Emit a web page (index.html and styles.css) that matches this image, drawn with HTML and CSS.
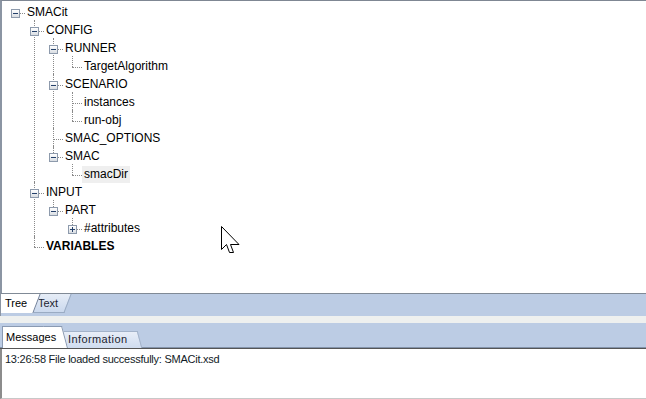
FILE: index.html
```html
<!DOCTYPE html>
<html lang="en">
<head>
  <meta charset="UTF-8" />
  <title>SMACit.xsd</title>
  <link rel="stylesheet" href="styles.css">
</head>
<body>
  <div class="tree-panel">
    <ul class="tree">
      <li><div class="row"><span class="box"></span><span class="label">SMACit</span></div>
        <ul>
          <li><div class="row"><span class="box"></span><span class="label">CONFIG</span></div>
            <ul>
              <li><div class="row"><span class="box"></span><span class="label">RUNNER</span></div>
                <ul>
                  <li><div class="row"><span class="label">TargetAlgorithm</span></div></li>
                </ul>
              </li>
              <li><div class="row"><span class="box"></span><span class="label">SCENARIO</span></div>
                <ul>
                  <li><div class="row"><span class="label">instances</span></div></li>
                  <li><div class="row"><span class="label">run-obj</span></div></li>
                </ul>
              </li>
              <li><div class="row"><span class="label">SMAC_OPTIONS</span></div></li>
              <li><div class="row"><span class="box"></span><span class="label">SMAC</span></div>
                <ul>
                  <li><div class="row"><span class="label selected">smacDir</span></div></li>
                </ul>
              </li>
            </ul>
          </li>
          <li><div class="row"><span class="box"></span><span class="label">INPUT</span></div>
            <ul>
              <li><div class="row"><span class="box"></span><span class="label">PART</span></div>
                <ul>
                  <li><div class="row"><span class="box plus"></span><span class="label">#attributes</span></div></li>
                </ul>
              </li>
            </ul>
          </li>
          <li><div class="row"><span class="label bold">VARIABLES</span></div></li>
        </ul>
      </li>
    </ul>

    <svg class="cursor" width="20" height="28" viewBox="0 0 20 28">
      <path d="M0.5 0.5 V23.5 L5.5 18.5 L8.5 26.5 L12.5 26.5 L9.5 18.5 H18 Z" fill="#fff" stroke="#000" stroke-width="1" stroke-linejoin="miter"/>
    </svg>
  </div>

  <div class="view-tabs">
    <div class="tab active">Tree</div>
    <div class="tab">Text</div>
  </div>

  <div class="splitter"></div>

  <div class="msg-tabs">
    <div class="tab active">Messages</div>
    <div class="tab">Information</div>
  </div>

  <div class="msg-body">
    13:26:58 File loaded successfully: SMACit.xsd
  </div>
</body>
</html>
```

FILE: styles.css
```css
* { box-sizing: border-box; }
html, body {
  margin: 0;
  padding: 0;
}
body {
  width: 646px;
  height: 399px;
  overflow: hidden;
  display: flex;
  flex-direction: column;
  font-family: "Liberation Sans", Arial, sans-serif;
  background: #fff;
  color: #000;
}

/* tree view */
.tree-panel {
  position: relative;
  height: 293px;
  border-top: 1px solid #7f8793;
  border-left: 2px solid #8b95a3;
  padding-top: 3px;
}
.tree, .tree ul {
  list-style: none;
  margin: 0;
  padding: 0;
}
.tree ul {
  padding-left: 19px;
}
.tree li {
  position: relative;
}
.tree li::before {
  content: '';
  position: absolute;
  left: 13px;
  top: 9px;
  width: 10px;
  border-top: 1px dotted #8a8a8a;
}
.tree ul > li::after {
  content: '';
  position: absolute;
  left: 13px;
  top: -2px;
  bottom: 0;
  border-left: 1px dotted #8a8a8a;
}
.tree ul > li:last-child::after {
  bottom: auto;
  height: 11px;
}
.row {
  position: relative;
  height: 18px;
  padding-left: 23px;
  font-size: 12px;
}
.label {
  display: inline-block;
  height: 17px;
  line-height: 17px;
  padding: 0 2px;
  white-space: nowrap;
}
.label.bold { font-weight: bold; }
.label.selected { background: #efefef; }

.box {
  position: absolute;
  z-index: 1;
  left: 9px;
  top: 5px;
  width: 9px;
  height: 9px;
  border: 1px solid #8d9aac;
  background: linear-gradient(#ffffff, #d9dde2);
}
.box::before {
  content: '';
  position: absolute;
  left: 1px;
  top: 3px;
  width: 5px;
  height: 1px;
  background: #24406a;
}
.box.plus::after {
  content: '';
  position: absolute;
  left: 3px;
  top: 1px;
  width: 1px;
  height: 5px;
  background: #24406a;
}

.cursor {
  position: absolute;
  left: 219px;
  top: 225px;
}

/* tabs */
.tab {
  position: relative;
  z-index: 0;
  font-size: 11px;
  white-space: nowrap;
}
.tab.active { z-index: 1; }
.tab::before, .tab::after {
  content: '';
  position: absolute;
  z-index: -1;
  top: 0;
  bottom: 0;
}
.tab::before {
  left: 0;
  right: 8px;
}
.tab::after {
  right: 0;
  width: 18px;
}

.view-tabs {
  height: 23px;
  display: flex;
  align-items: flex-start;
  background: #bccce4;
  border-top: 1px solid #808a96;
  border-left: 1px solid #8b95a3;
  overflow: hidden;
}
.view-tabs .tab {
  height: 19px;
  line-height: 19px;
}
.view-tabs .tab::after { transform: skewX(-21deg); }
.view-tabs .tab:first-child {
  width: 36px;
  padding-left: 4px;
}
.view-tabs .tab + .tab {
  width: 37px;
  margin-left: -6px;
  padding-left: 7px;
  color: #1c2430;
}
.view-tabs .tab.active::before,
.view-tabs .tab.active::after {
  background: #fff;
}
.view-tabs .tab.active::after { border-right: 1px solid #6d7e99; }
.view-tabs .tab:not(.active)::before,
.view-tabs .tab:not(.active)::after {
  background: linear-gradient(#e6edf7, #cbd9ee);
  border-bottom: 1px solid #9aabc3;
}
.view-tabs .tab:not(.active)::after { border-right: 1px solid #9aabc3; }

.splitter {
  height: 7px;
  background: #eef0ef;
}

.msg-tabs {
  height: 26px;
  display: flex;
  align-items: flex-end;
  padding-left: 2px;
  background: #bccce4;
  border-bottom: 1px solid #555;
  box-shadow: inset 0 -1px #8393ab;
  overflow: hidden;
}
.msg-tabs .tab::after { transform: skewX(15deg); }
.msg-tabs .tab.active {
  width: 63px;
  height: 22px;
  line-height: 22px;
  padding-left: 4px;
}
.msg-tabs .tab + .tab {
  width: 81px;
  height: 17px;
  line-height: 16px;
  margin-left: -6px;
  padding-left: 9px;
  letter-spacing: 0.4px;
  color: #1c2430;
}
.msg-tabs .tab.active::before,
.msg-tabs .tab.active::after {
  background: #fff;
  border-top: 1px solid #8a9ab2;
}
.msg-tabs .tab.active::before { border-left: 1px solid #8a9ab2; }
.msg-tabs .tab.active::after { border-right: 1px solid #8a9ab2; }
.msg-tabs .tab:not(.active)::before,
.msg-tabs .tab:not(.active)::after {
  background: linear-gradient(#e8eef8, #cfdcef);
  border-top: 1px solid #a3b3ca;
}
.msg-tabs .tab:not(.active)::after { border-right: 1px solid #a3b3ca; }

.msg-body {
  height: 50px;
  padding: 3px 3px 0;
  border-left: 2px solid #8c8c8c;
  border-bottom: 1px solid #c8c8c8;
  font-size: 11px;
  line-height: 14px;
  letter-spacing: -0.25px;
  color: #111a26;
}
```
